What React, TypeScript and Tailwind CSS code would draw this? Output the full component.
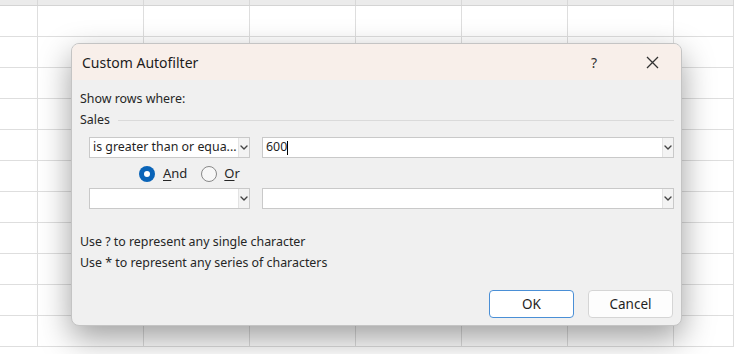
import React from "react";

const cols = ["", "B", "C", "D", "E", "F", "G", "H"];
const widths = [38, 106, 106, 106, 106, 106, 106, 60];

function Chevron() {
  return (
    <svg width="8" height="5" viewBox="0 0 8 5" fill="none">
      <path d="M1 1 L4 4 L7 1" stroke="#444" strokeWidth="1.4" strokeLinecap="round" strokeLinejoin="round" />
    </svg>
  );
}

function Combo({ width, text, cursor }: { width: number; text?: string; cursor?: boolean }) {
  return (
    <div
      className="flex h-[21px] items-stretch border border-[#c9c9c9] bg-white"
      style={{ width }}
    >
      <div className="flex flex-1 items-center overflow-hidden pl-[3px] text-[12.4px] leading-none text-[#1f1f1f]">
        <span className="whitespace-nowrap">{text}</span>
        {cursor && <span className="h-[14px] w-[1px] bg-black" />}
      </div>
      <div className="flex w-[11px] items-center justify-center border-l border-[#e3e3e3] bg-[#f3f3f3]">
        <Chevron />
      </div>
    </div>
  );
}

export default function App() {
  return (
    <div
      className="relative h-[354px] w-[734px] overflow-hidden bg-white"
      style={{ fontFamily: '"Noto Sans", "Open Sans", sans-serif' }}
    >
      {/* spreadsheet grid */}
      <div className="flex flex-col">
        <div className="flex h-[6px] overflow-hidden border-b border-[#d4d4d4] bg-[#ebebeb]">
          {cols.map((c, i) => (
            <div
              key={i}
              className="relative shrink-0 border-r border-[#d8d8d8]"
              style={{ width: widths[i] }}
            >
              <span className="absolute left-0 right-0 top-[-12px] text-center text-[13px] leading-[14px] text-[#555]">
                {c}
              </span>
            </div>
          ))}
        </div>
        {Array.from({ length: 11 }).map((_, r) => (
          <div key={r} className="flex h-[31px] border-b border-[#dedede]">
            {widths.map((w, i) => (
              <div key={i} className="shrink-0 border-r border-[#dedede]" style={{ width: w }} />
            ))}
          </div>
        ))}
      </div>

      {/* dialog */}
      <div className="absolute left-[71px] top-[43px] flex h-[283px] w-[611px] flex-col overflow-hidden rounded-[8px] border border-[#c4c4c4] bg-[#f0f0f0] shadow-[0_12px_32px_rgba(0,0,0,0.38)]">
        <div className="flex h-[36px] shrink-0 items-center bg-[#f8efea] pl-[10px] pr-[22px]">
          <span className="text-[14px] text-[#1c1c1c]">Custom Autofilter</span>
          <span className="ml-auto mr-[49px] text-[14px] text-[#333]">?</span>
          <svg width="13" height="13" viewBox="0 0 13 13">
            <path d="M1 1 L12 12 M12 1 L1 12" stroke="#333" strokeWidth="1.3" />
          </svg>
        </div>
        <div className="flex flex-1 flex-col pl-[8px] pr-[7px] text-[12.4px] text-[#262626]">
          <div className="mt-[10px] h-[18px] leading-[18px]">Show rows where:</div>
          <div className="mt-[3px] flex h-[18px] items-center gap-[8px] leading-[18px]">
            <span>Sales</span>
            <div className="h-[1px] flex-1 bg-[#dadada]" />
          </div>
          <div className="ml-[9px] mt-[8px] flex gap-[12px]">
            <Combo width={161} text="is greater than or equa..." />
            <Combo width={412} text="600" cursor />
          </div>
          <div className="ml-[59px] mt-[8px] flex h-[16px] items-center">
            <div className="flex h-[16px] w-[16px] items-center justify-center rounded-full bg-[#0a64b8]">
              <div className="h-[6px] w-[6px] rounded-full bg-white" />
            </div>
            <span className="ml-[8px] text-[13px]">
              <span className="underline underline-offset-2">A</span>nd
            </span>
            <div className="ml-[14px] h-[16px] w-[16px] rounded-full border border-[#888] bg-[#f7f7f7]" />
            <span className="ml-[7px] text-[13px]">
              <span className="underline underline-offset-2">O</span>r
            </span>
          </div>
          <div className="ml-[9px] mt-[6px] flex gap-[12px]">
            <Combo width={161} />
            <Combo width={412} />
          </div>
          <div className="mt-[24px] h-[18px] leading-[18px]">Use ? to represent any single character</div>
          <div className="mt-[3px] h-[18px] leading-[18px]">Use * to represent any series of characters</div>
          <div className="mt-[18px] flex justify-end gap-[14px] pr-[1px]">
            <button className="flex h-[28px] w-[85px] items-center justify-center rounded-[4px] border-[1.5px] border-[#4a8fd6] bg-white text-[13.5px] text-[#1f1f1f]">
              OK
            </button>
            <button className="flex h-[28px] w-[85px] items-center justify-center rounded-[4px] border border-[#d5d5d5] bg-[#fdfdfd] text-[13.5px] text-[#1f1f1f]">
              Cancel
            </button>
          </div>
        </div>
      </div>
    </div>
  );
}
